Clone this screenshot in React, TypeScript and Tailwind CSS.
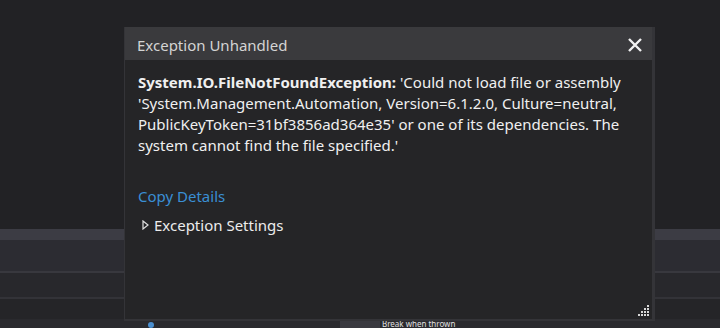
import React from "react";

function Band() {
  return (
    <div className="flex flex-col w-full">
      <div className="h-[229px] bg-[#222225]" />
      <div className="h-[11px] bg-[#3c3c44]" />
      <div className="h-[31px] bg-[#2c2c32]" />
      <div className="h-[2px] bg-[#38383e]" />
      <div className="h-[24px] bg-[#28282c]" />
      <div className="h-[2px] bg-[#333338]" />
      <div className="h-[20px] bg-[#252528]" />
      <div className="h-[9px] bg-[#2a2a2e] flex items-start">
        <div className="w-[148px]" />
        <div className="w-[6px] h-[6px] rounded-full bg-[#4a8fd0] mt-[3px]" />
        <div className="w-[186px]" />
        <div className="w-[40px] h-[9px] bg-[#3a3a40]" />
        <div className="text-[8px] leading-[9px] text-[#e0e0e0] ml-[2px]">Break when thrown</div>
      </div>
    </div>
  );
}

export default function App() {
  return (
    <div
      className="relative w-[720px] h-[328px] overflow-hidden bg-[#222225]"
      style={{ fontFamily: '"Noto Sans", "Open Sans", sans-serif' }}
    >
      <Band />
      <div className="absolute left-[124px] top-[27px] w-[531px] h-[294px] flex flex-col bg-[#252527] border-l border-r-[3px] border-b-2 border-[#343438]">
        <div className="h-[33px] bg-[#3a3a3d] flex items-center justify-between pl-[12px] pr-[9px]">
          <span className="text-[15px] leading-[20px] text-[#d4d4d4] mt-[2px]">Exception Unhandled</span>
          <svg width="16" height="16" viewBox="0 0 16 16" className="mt-[2px]">
            <path d="M2 2 L14 14 M14 2 L2 14" stroke="#f2f2f2" strokeWidth="2.4" />
          </svg>
        </div>
        <div className="flex-1 flex flex-col pl-[13px] pr-[10px] pt-[12px] relative">
          <p className="text-[15px] leading-[21px] text-[#f0f0f0]">
            <span className="font-bold">System.IO.FileNotFoundException:</span> 'Could not load file or assembly
            'System.Management.Automation, Version=6.1.2.0, Culture=neutral,
            PublicKeyToken=31bf3856ad364e35' or one of its dependencies. The
            system cannot find the file specified.'
          </p>
          <div className="mt-[30px] text-[15px] leading-[20px] text-[#3a8fd4]">Copy Details</div>
          <div className="mt-[9px] flex items-center gap-[5px] text-[15px] leading-[20px] text-[#ececec]">
            <svg width="7" height="10" viewBox="0 0 7 10" className="ml-[4px]">
              <path d="M1 1 L6 5 L1 9 Z" fill="none" stroke="#e0e0e0" strokeWidth="1.2" />
            </svg>
            <span>Exception Settings</span>
          </div>
          <svg width="14" height="14" viewBox="0 0 14 14" className="absolute right-[2px] bottom-[2px]">
            {[
              [11, 2],
              [8, 5], [11, 5],
              [5, 8], [8, 8], [11, 8],
              [2, 11], [5, 11], [8, 11], [11, 11],
            ].map(([x, y], i) => (
              <rect key={i} x={x} y={y} width="2" height="2" fill="#d8d8d8" />
            ))}
          </svg>
        </div>
      </div>
    </div>
  );
}
